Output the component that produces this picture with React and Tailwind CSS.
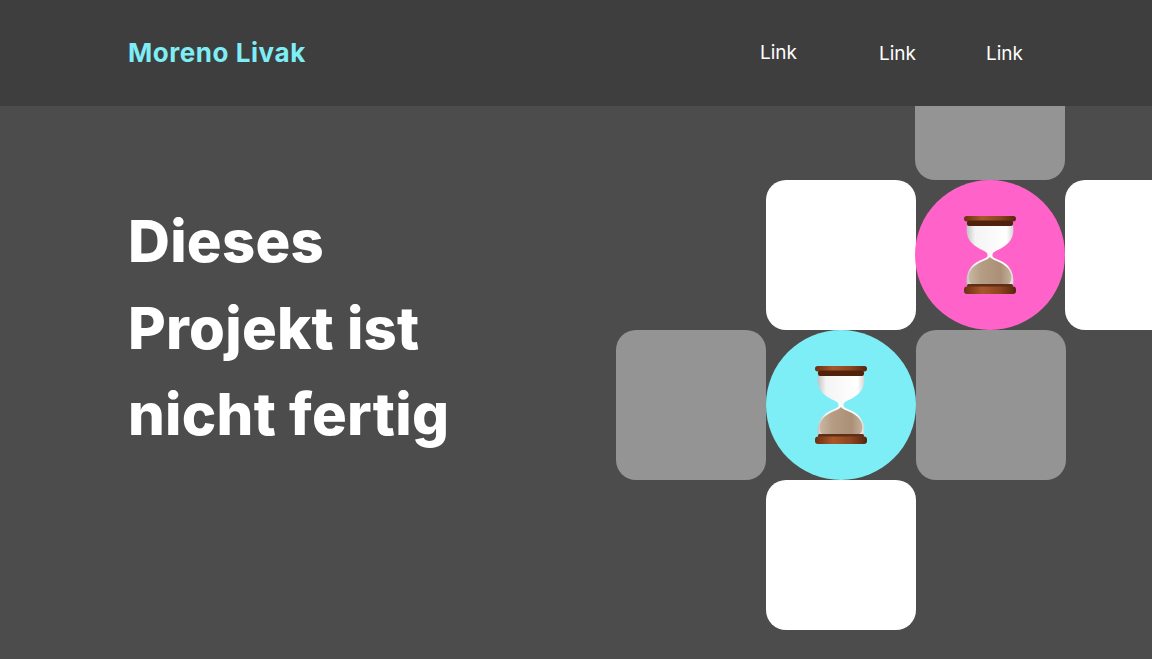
import { useId } from 'react'

const TILES = [
  { id: 'top', className: 'col-start-3 row-start-1 bg-[#949494] rounded-[20px] -translate-x-px' },
  { id: 'white-1', className: 'col-start-2 row-start-2 bg-white rounded-[20px]' },
  { id: 'pink', className: 'col-start-3 row-start-2 bg-[#ff63ca] rounded-full -translate-x-px', hourglass: true },
  { id: 'white-2', className: 'col-start-4 row-start-2 bg-white rounded-l-[20px] -translate-x-px' },
  { id: 'gray-1', className: 'col-start-1 row-start-3 bg-[#949494] rounded-[20px]' },
  { id: 'cyan', className: 'col-start-2 row-start-3 bg-[#7eeef6] rounded-full', hourglass: true },
  { id: 'gray-2', className: 'col-start-3 row-start-3 bg-[#949494] rounded-[20px]' },
  { id: 'white-3', className: 'col-start-2 row-start-4 bg-white rounded-[20px]' }
]

function Hourglass() {
  const id = useId()
  return (
    <svg width="56" height="82" viewBox="0 0 56 82">
      <defs>
        <linearGradient id={`${id}wood`} x1="0" y1="0" x2="1" y2="0">
          <stop offset="0" stopColor="#6b2f12" />
          <stop offset="0.35" stopColor="#a9592c" />
          <stop offset="0.7" stopColor="#8a4520" />
          <stop offset="1" stopColor="#57250e" />
        </linearGradient>
        <linearGradient id={`${id}glass`} x1="0" y1="0" x2="1" y2="0">
          <stop offset="0" stopColor="#c4c4c4" />
          <stop offset="0.18" stopColor="#f4f4f4" />
          <stop offset="0.85" stopColor="#ffffff" />
          <stop offset="1" stopColor="#d6d6d6" />
        </linearGradient>
        <linearGradient id={`${id}sand`} x1="0" y1="0" x2="1" y2="0">
          <stop offset="0" stopColor="#c9b7a3" />
          <stop offset="0.3" stopColor="#b59c82" />
          <stop offset="0.75" stopColor="#ab9077" />
          <stop offset="1" stopColor="#c4b09b" />
        </linearGradient>
        <filter id={`${id}soft`}>
          <feGaussianBlur stdDeviation="0.5" />
        </filter>
      </defs>
      <g filter={`url(#${id}soft)`}>
        <path d="M5 11 C3 24 9 30 18 35 C22 37 25 38 25.5 40 L25.5 42 C25 44 21 45 17 47 C8 51 3 60 5 72 L51 72 C53 60 48 51 39 47 C35 45 31 44 30.5 42 L30.5 40 C31 38 34 37 38 35 C47 30 53 24 51 11 Z" fill={`url(#${id}glass)`} />
        <path d="M28 43 C26 46 21 46.5 17 49 C9 53 5.5 60 7 66 C7.5 69 9 70.5 12 70.5 L44 70.5 C47 70.5 48.5 69 49 66 C50.5 60 47 53 39 49 C35 46.5 30 46 28 43 Z" fill={`url(#${id}sand)`} />
        <rect x="2" y="2" width="52" height="5.5" rx="2.7" fill={`url(#${id}wood)`} />
        <rect x="5" y="6.5" width="46" height="5.5" rx="2" fill="#4f2410" />
        <rect x="5" y="70" width="46" height="3.5" rx="1.5" fill="#5f2d14" />
        <rect x="2" y="72.5" width="52" height="7.5" rx="3" fill={`url(#${id}wood)`} />
      </g>
    </svg>
  )
}

export default function App() {
  return (
    <div className="h-[659px] overflow-hidden bg-[#4c4c4c] font-['Inter',sans-serif] text-white">
      <header className="relative z-10 flex h-[106px] items-center bg-[#3e3e3e] pl-[128px]">
        <a href="#" className="mb-0.5 w-[632px] text-[26px] font-bold tracking-[0.55px] text-[#7eeef6]">Moreno Livak</a>
        <nav className="mt-0.5 flex items-center text-[19px] font-normal">
          <a href="#" className="mb-0.5 w-[119px]">Link</a>
          <a href="#" className="w-[107px]">Link</a>
          <a href="#">Link</a>
        </nav>
      </header>

      <main className="flex h-[553px]">
        <h1 className="mt-[92px] w-[616px] shrink-0 pl-[128px] text-[58px] leading-[86.5px] font-extrabold tracking-[0.25px]">
          Dieses<br />Projekt ist<br />nicht fertig
        </h1>
        <div className="-mt-[76px] grid shrink-0 grid-cols-[repeat(4,150px)] grid-rows-[repeat(4,150px)]">
          {TILES.map((tile) => (
            <div key={tile.id} className={`flex items-center justify-center ${tile.className}`}>
              {tile.hourglass && <Hourglass />}
            </div>
          ))}
        </div>
      </main>
    </div>
  )
}
